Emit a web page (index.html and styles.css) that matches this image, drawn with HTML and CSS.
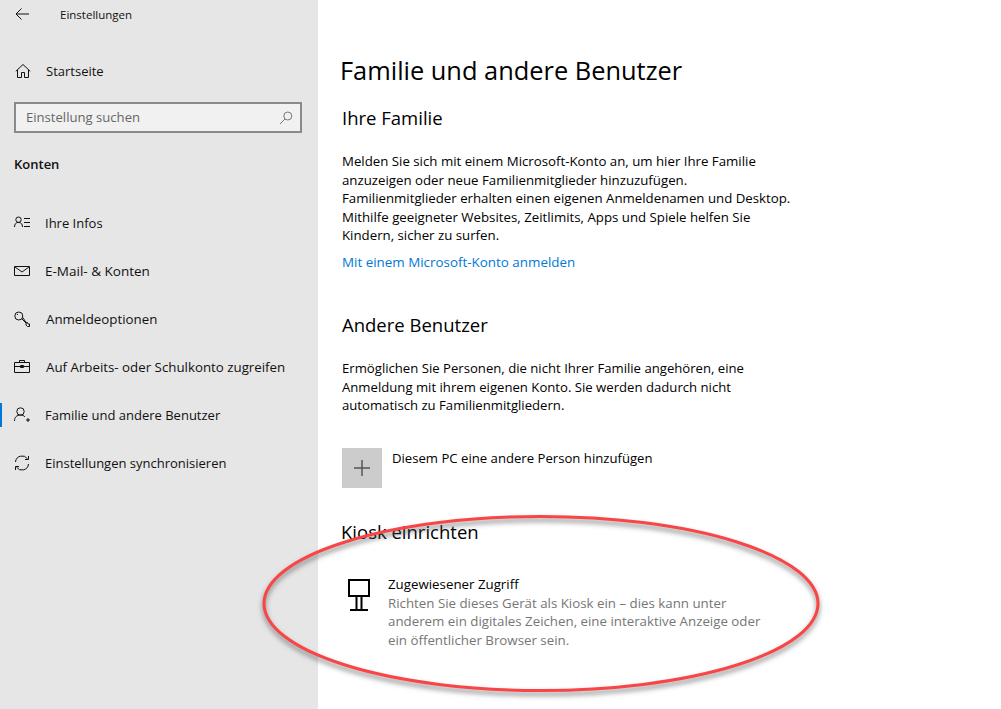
FILE: index.html
```html
<!DOCTYPE html>
<html lang="de">
<head>
<meta charset="utf-8">
<title>Einstellungen</title>
<link rel="stylesheet" href="styles.css">
</head>
<body>
<div class="app">
  <aside class="sidebar">
    <div class="titlebar">
      <svg class="back" width="16" height="14" viewBox="0 0 16 14"><path d="M15 7H2M7.500 1.500 2 7l5.500 5.500" fill="none" stroke="#111" stroke-width="1"/></svg>
      <span class="apptitle">Einstellungen</span>
    </div>
    <div class="home">
      <svg class="icon" width="16" height="16" viewBox="0 0 16 16"><path d="M.8 8.300 8 1.500l7.200 6.800M2.500 7v7.500h4V9.500h3v5h4V7" fill="none" stroke="#111" stroke-width="1"/></svg>
      <span>Startseite</span>
    </div>
    <div class="search">
      <span class="search-text">Einstellung suchen</span>
      <svg width="14" height="14" viewBox="0 0 14 14"><circle cx="8.800" cy="5" r="4" fill="none" stroke="#777" stroke-width="1"/><path d="M6 8 1 13" stroke="#777" stroke-width="1"/></svg>
    </div>
    <div class="group">Konten</div>
    <nav class="nav">
      <div class="nav-item">
        <svg class="icon" width="16" height="16" viewBox="0 0 16 16"><circle cx="4.500" cy="4.700" r="2.700" fill="none" stroke="#111"/><path d="M.5 12c0-3 1.500-4.600 4-4.600s4 1.600 4 4.600M10 3.500h6M10 7.500h6M10 11.500h6" fill="none" stroke="#111"/></svg>
        <span>Ihre Infos</span>
      </div>
      <div class="nav-item">
        <svg class="icon" width="16" height="16" viewBox="0 0 16 16"><path d="M.5 3.500h15v9H.5zM1 4l7 5 7-5" fill="none" stroke="#111"/></svg>
        <span class="wide">E-Mail- &amp; Konten</span>
      </div>
      <div class="nav-item">
        <svg class="icon" width="16" height="16" viewBox="0 0 16 16"><circle cx="4.800" cy="5" r="4" fill="none" stroke="#111"/><path d="M7.800 7.800 12 12v2l1.500 1.500h2V13L14 13l-.5-1.500h-1.500L8.800 6.500M3 3.500h1" fill="none" stroke="#111"/></svg>
        <span class="shift">Anmeldeoptionen</span>
      </div>
      <div class="nav-item">
        <svg class="icon" width="16" height="16" viewBox="0 0 16 16"><path d="M.5 3.500h15v10H.5zM5.500 3.500v-2h5v2M.5 7.500h15M6.500 6.500h3v2h-3z" fill="none" stroke="#111"/></svg>
        <span class="shift">Auf Arbeits- oder Schulkonto zugreifen</span>
      </div>
      <div class="nav-item active">
        <svg class="icon" width="16" height="16" viewBox="0 0 16 16"><circle cx="6.500" cy="4.500" r="3.700" fill="none" stroke="#111"/><path d="M.5 14c0-4 2.300-6 6-6 2 0 3.600.7 4.500 2M12 13h4M14 11v4" fill="none" stroke="#111"/></svg>
        <span>Familie und andere Benutzer</span>
      </div>
      <div class="nav-item">
        <svg class="icon" width="16" height="16" viewBox="0 0 16 16"><path d="M1.500 7A6.600 6.600 0 0 1 13.500 3.800M14.500 9A6.600 6.600 0 0 1 2.500 12.200M14.500 1v3.500H11M1.500 15v-3.500H5" fill="none" stroke="#111"/></svg>
        <span>Einstellungen synchronisieren</span>
      </div>
    </nav>
  </aside>
  <main class="content">
    <h1>Familie und andere Benutzer</h1>
    <h2 class="first">Ihre Familie</h2>
    <p class="body-text family">Melden Sie sich mit einem Microsoft-Konto an, um hier Ihre Familie<br>anzuzeigen oder neue Familienmitglieder hinzuzufügen.<br>Familienmitglieder erhalten einen eigenen Anmeldenamen und Desktop.<br>Mithilfe geeigneter Websites, Zeitlimits, Apps und Spiele helfen Sie<br>Kindern, sicher zu surfen.</p>
    <a class="link" href="#">Mit einem Microsoft-Konto anmelden</a>
    <h2 class="second">Andere Benutzer</h2>
    <p class="body-text others">Ermöglichen Sie Personen, die nicht Ihrer Familie angehören, eine<br>Anmeldung mit ihrem eigenen Konto. Sie werden dadurch nicht<br>automatisch zu Familienmitgliedern.</p>
    <div class="add-row">
      <div class="add-tile">
        <svg width="16" height="16" viewBox="0 0 16 16"><path d="M8 0v16M0 8h16" stroke="#555" stroke-width="1.500"/></svg>
      </div>
      <span class="add-label">Diesem PC eine andere Person hinzufügen</span>
    </div>
    <h2 class="third">Kiosk einrichten</h2>
    <div class="kiosk">
      <svg class="kiosk-icon" width="24" height="32" viewBox="0 0 24 32"><path d="M2 1h20v16H2zM9.500 17v14M14.500 17v14M3 31h18" fill="none" stroke="#000" stroke-width="2"/></svg>
      <div class="kiosk-text">
        <div class="kiosk-title">Zugewiesener Zugriff</div>
        <div class="kiosk-desc">Richten Sie dieses Gerät als Kiosk ein – dies kann unter<br>anderem ein digitales Zeichen, eine interaktive Anzeige oder<br>ein öffentlicher Browser sein.</div>
      </div>
    </div>
  </main>
</div>
<svg class="annotation" width="1001" height="709" viewBox="0 0 1001 709">
  <defs><filter id="soft" x="-10%" y="-20%" width="120%" height="140%"><feGaussianBlur stdDeviation="2.500"/></filter></defs>
  <ellipse cx="541" cy="607" rx="277" ry="87" fill="none" stroke="#555" stroke-opacity=".65" stroke-width="3.500" filter="url(#soft)"/>
  <ellipse cx="541" cy="603.500" rx="277" ry="87" fill="none" stroke="#f94545" stroke-width="3"/>
</svg>
</body>
</html>
```
FILE: styles.css
```css
* { box-sizing: border-box; }
html, body { margin: 0; height: 100%; overflow: hidden; }
body { position: relative; background: #fff; color: #111; font-family: "Open Sans", "Noto Sans", sans-serif; font-size: 13px; }
.app { display: flex; width: 1001px; height: 709px; }

.sidebar { width: 318px; flex: none; background: #e6e6e6; display: flex; flex-direction: column; }
.titlebar { height: 30px; display: flex; align-items: center; padding-left: 14px; }
.back { margin-right: 30px; margin-top: -2px; }
.apptitle { font-size: 11.500px; margin-top: -1px; }
.home { height: 48px; margin-top: 17px; display: flex; align-items: center; padding-left: 15px; gap: 15px; }
.search { height: 31px; margin: 7px 16px 0 14px; border: 2px solid #8a8a8a; background: #f1f1f1; display: flex; align-items: center; justify-content: space-between; padding: 0 7px 0 10px; color: #666; }
.search-text { margin-top: -2px; font-size: 13.100px; }
.group { font-weight: 600; margin-top: 21px; padding-left: 14px; height: 20px; line-height: 20px; }
.nav { margin-top: 25px; display: flex; flex-direction: column; }
.nav-item { height: 48px; position: relative; display: flex; align-items: center; padding-left: 14px; gap: 15px; }
.nav-item .shift { margin-left: 1px; font-size: 13.300px; }
.nav-item .wide { font-size: 13.500px; }
.nav-item.active::before { content: ""; position: absolute; left: 0; top: 12px; width: 2px; height: 24px; background: #0078d7; }
.icon { flex: none; }

.content { flex: 1; padding: 0 0 0 22px; color: #000; }
.content h1 { margin: 50px 0 0; font-size: 25.400px; line-height: 40px; font-weight: 400; white-space: nowrap; }
.content h2 { font-size: 18.500px; line-height: 26px; font-weight: 400; margin: 0 0 0 2px; white-space: nowrap; }
.content h2.first { margin-top: 15px; }
.content h2.second { margin-top: 41px; }
.content h2.third { margin: 31px 0 0 1px; }
.body-text { margin: 21px 0 0 2px; line-height: 18.600px; white-space: nowrap; }
.body-text.family { font-size: 13.250px; }
.body-text.others { font-size: 13.150px; margin-top: 21px; }
.link { display: block; margin: 8px 0 0 2px; line-height: 18px; font-size: 13.400px; color: #0078d7; text-decoration: none; }
.add-row { display: flex; margin: 33px 0 0 2px; gap: 10px; font-size: 13.150px; }
.add-tile { width: 40px; height: 40px; background: #ccc; display: flex; align-items: center; justify-content: center; }
.add-label { line-height: 20px; }
.kiosk { display: flex; margin: 30px 0 0 8px; gap: 17px; }
.kiosk-icon { flex: none; margin-top: 4px; margin-left: -1px; }
.kiosk-title { line-height: 19px; font-size: 13.300px; }
.kiosk-desc { line-height: 18.600px; font-size: 13.300px; color: #767676; white-space: nowrap; }

.annotation { position: absolute; left: 0; top: 0; pointer-events: none; }
```
